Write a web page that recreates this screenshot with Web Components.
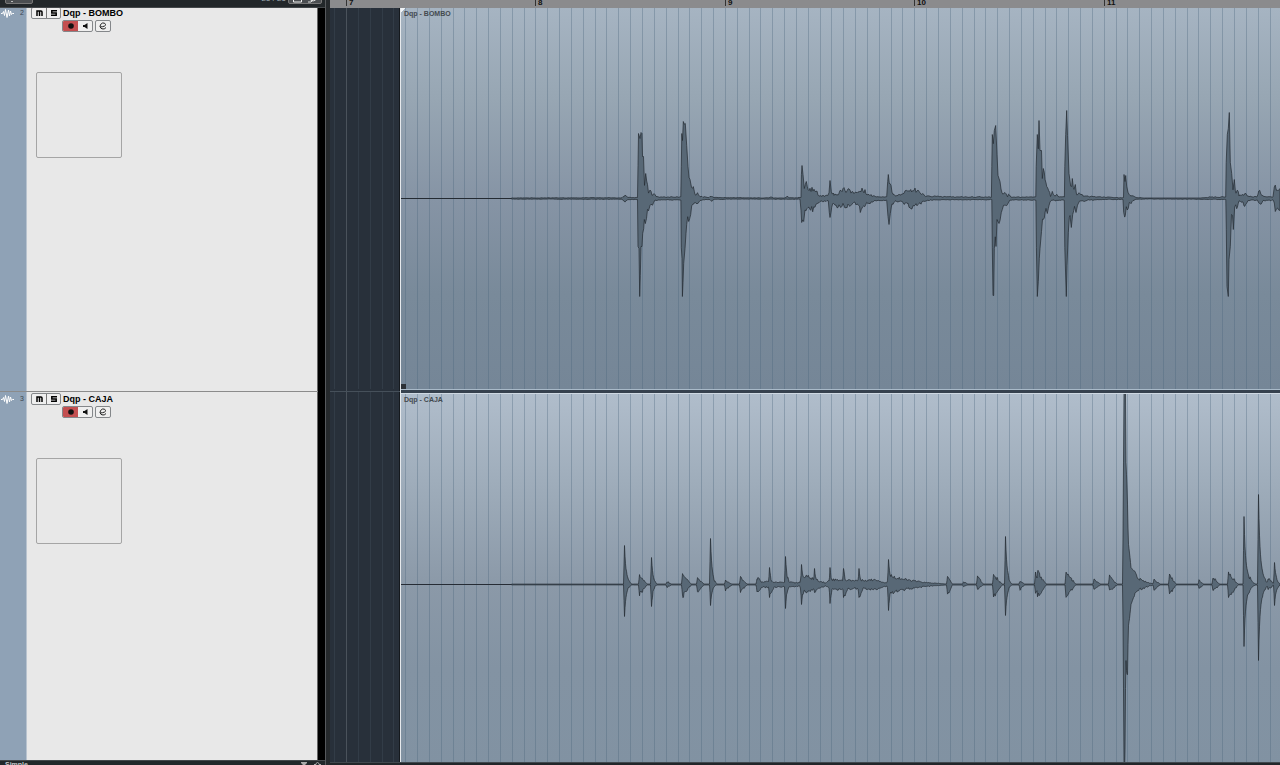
<!DOCTYPE html>
<html lang="es">
<head>
<meta charset="utf-8">
<title>Arrange view</title>
<style>
  html, body { margin: 0; height: 100%; background: #22272a; }
  body { font-family: "Liberation Sans", Arial, sans-serif; overflow: hidden; }
</style>
</head>
<body>
<daw-arranger>
  <daw-sidebar slot="side">
    <daw-track number="2" name="Dqp - BOMBO"></daw-track>
    <daw-track number="3" name="Dqp - CAJA"></daw-track>
  </daw-sidebar>
  <daw-timeline slot="time">
    <daw-lane wave="bombo" name="Dqp - BOMBO" tone="low"></daw-lane>
    <daw-lane wave="caja" name="Dqp - CAJA" tone="high"></daw-lane>
  </daw-timeline>
</daw-arranger>

<script>
const define = (tag, html, setup) => customElements.define(tag, class extends HTMLElement {
  constructor() { super(); this.attachShadow({ mode: 'open' }); }
  connectedCallback() {
    this.shadowRoot.innerHTML = typeof html === 'function' ? html(this) : html;
    if (setup) setup(this, this.shadowRoot);
  }
});

define('daw-arranger', `
<style>
  :host { display: grid; grid-template-columns: 326px 1fr; height: 100vh; overflow: hidden; background: #25292c; column-gap: 4px; }
  ::slotted(*) { min-width: 0; min-height: 0; }
</style>
<slot name="side"></slot><slot name="time"></slot>`);

define('daw-sidebar', `
<style>
  :host { display: flex; flex-direction: column; box-sizing: border-box; border-right: 1px solid #56595c; background: #000; }
  header { flex: none; height: 8px; box-sizing: border-box; border-bottom: 1px solid #44484b; overflow: hidden; display: flex; align-items: flex-end; background: #22272a; }
  .bar { flex: 1; height: 24px; box-sizing: border-box; padding: 0 3px 3px 5px; display: flex; align-items: flex-end; gap: 2px; }
  .bar button { height: 18px; box-sizing: border-box; border: 1px solid #777; border-radius: 2px; background: #4b4e51; padding: 0 4px; display: flex; align-items: flex-end; gap: 6px; }
  .bar .menu { width: 28px; }
  .count { margin-left: auto; color: #9ba6b0; font-size: 8px; line-height: 11px; }
  .rows { flex: 1; min-height: 0; overflow: hidden; }
  .rows ::slotted(:first-child) { margin-top: -2px; }
  footer { flex: none; height: 5px; box-sizing: border-box; border-top: 1px solid #44484b; overflow: hidden; background: #22272a; color: #c6c9cb; font-size: 7px; line-height: 8px; font-weight: 700; }
  .foot { height: 20px; display: flex; align-items: flex-start; padding: 0 4px 0 5px; gap: 7px; }
  .foot span { margin-right: auto; }
  .foot svg { margin-top: 1px; }
  svg { display: block; }
</style>
<header><div class="bar">
  <button class="menu" aria-label="Menu"><svg width="4" height="12"><path d="M1 10h2v1H1z" fill="#bbb"/></svg></button>
  <span class="count">25 / 26</span>
  <button aria-label="Filter"><svg width="9" height="14"><path d="M.5 1v12h8V1" fill="none" stroke="#eee"/></svg><svg width="9" height="14"><circle cx="5" cy="9" r="3" fill="none" stroke="#ddd"/><path d="M0 13h3l2-2" stroke="#ddd" fill="none"/></svg></button>
</div></header>
<div class="rows"><slot></slot></div>
<footer><div class="foot"><span>Simple</span>
  <svg width="6" height="4"><path d="M0 0h6v1L3 4 0 1z" fill="#aaa"/></svg>
  <svg width="7" height="8"><path d="M0 2.500h2v-1l1.500-1L5 1.500v1h2M1.500 3v5M5.500 3v5" fill="none" stroke="#aaa"/></svg>
</div></footer>`);

define('daw-track', el => `
<style>
  :host { display: grid; grid-template-columns: 27px 1fr; height: 386px; box-sizing: border-box; border-bottom: 1px solid #8b8b8b; margin-right: 7px; background: #e8e8e8; }
  .strip { background: #8fa2b6; border-right: 1px solid #b8c3cf; display: flex; justify-content: space-between; padding: 1px 2px 0 1px; }
  .strip span { font-size: 7px; line-height: 12px; color: #3d4751; }
  .panel { border-right: 1px solid #666; padding: 1px 0 0 4px; }
  .row { display: flex; align-items: center; }
  .title { gap: 2px; }
  h2 { margin: 0; font-size: 9px; line-height: 12px; font-weight: 700; color: #000; white-space: nowrap; }
  .tools { gap: 2px; padding: 1px 0 0 31px; }
  .group { display: flex; border: 1px solid #84878a; border-radius: 2px; background: #efefef; overflow: hidden; }
  button { box-sizing: border-box; display: flex; align-items: center; justify-content: center; width: 14px; height: 10px; padding: 0; border: 0; background: none; color: #111; }
  .ms button + button { border-left: 1px solid #777; }
  .rec { background: #c34f50; width: 15px; }
  .art { width: 84px; height: 84px; border: 1px solid #a5a5a5; border-radius: 2px; margin: 40px 0 0 5px; }
  svg { display: block; }
</style>
<div class="strip">
  <svg width="13" height="12" fill="none" stroke="#fff" stroke-linejoin="round"><path d="M0 6.500h1.500l1-2 1 4 1-6 1.500 8L7.500 3l1 6 1-5 1 3.500 1-1H13"/></svg>
  <span>${el.getAttribute('number')}</span>
</div>
<div class="panel">
  <div class="row title">
    <div class="group ms">
      <button aria-label="Mute"><svg width="7" height="6" fill="none" stroke="#000" stroke-width="1.500"><path d="M1 6V1h4q1 0 1 1v4M3.500 1v5"/></svg></button>
      <button aria-label="Solo"><svg width="6" height="6" fill="none" stroke="#000" stroke-width="1.500"><path d="M6 .8H.8V3h4.400v2.200H0"/></svg></button>
    </div>
    <h2>${el.getAttribute('name')}</h2>
  </div>
  <div class="row tools">
    <div class="group">
      <button class="rec" aria-label="Record"><svg width="6" height="6"><circle cx="3" cy="3" r="2.800" fill="#111"/></svg></button>
      <button aria-label="Monitor"><svg width="5" height="6"><path d="M0 2h1.500L4.500 0v6L1.500 4H0z" fill="#111"/></svg></button>
    </div>
    <div class="group">
      <button aria-label="Edit channel"><svg width="8" height="8" fill="none" stroke="#222"><path d="M1 5Q7 4.500 6.500 2.500 6 .5 3.500 1 1 2 1 4.500 1.500 7 4 7 6 7 7 5.500"/></svg></button>
    </div>
  </div>
  <div class="art"></div>
</div>`);

define('daw-timeline', `
<style>
  :host { display: flex; flex-direction: column; overflow: hidden; background: #28303a; }
  .ruler { flex: none; height: 8px; display: flex; padding-left: 16px; overflow: hidden; background: #8b8b8d; }
  .ruler span { flex: none; box-sizing: border-box; width: 189px; border-left: 1px solid #333; padding-left: 2px; font-size: 8px; line-height: 7px; height: 7px; font-weight: 700; color: #111; margin-top: -1px; }
  .ruler span:nth-child(even) { width: 190px; }
  .lanes { flex: 1; min-height: 0; overflow: hidden; }
  .lanes ::slotted(:first-child) { margin-top: -2px; }
  .edge { flex: none; height: 3px; box-sizing: border-box; border-top: 1px solid #41484e; background: #22262a; }
</style>
<div class="ruler"><span>7</span><span>8</span><span>9</span><span>10</span><span>11</span></div>
<div class="lanes"><slot></slot></div>
<div class="edge"></div>`);

/* Envelopes: x, level. "up" is above the zero line, "down" below it. */
const bombo = {
  up: [401,0,511,0,512,.6,622,.8,625,3,628,1,637.5,1,638,33,638.5,65,640,60,641,66,642,65,642.5,42,643.5,42,644.5,12,645.7,25,647.5,14,648.5,7,650,9,652,3,654,5,656,1.8,664,1.5,680.8,1.5,681.3,32,681.8,65,682.5,58,683.3,77,685.3,75,686.7,53,688,32,690,19,691.5,10,693.3,10,695,4,697.5,5,700,2,709,1,711.700,3,714,1,735,.8,769,.6,771,2,773,.6,785,.6,787,2.5,789,.6,801,1,801.4,24,802,33,803,24,804.3,11,805.300,14,806.3,17,808,8,810,11,814,9,820,3,828,3,829,7,830,18,831.3,9,834,4,838,4,840,9,848,9,857,6,860,8,865,9,868,4,877,2,886.700,2,887.700,17,888.300,24,890,15,892,7,894,4,900,4,906.700,7,910.700,9,915,9,921.700,4.500,927,2.5,947,1.8,990,1.5,991.400,1.5,991.800,32,992.300,64,994.300,68,995.700,73,997,44,999,20,1001,11,1003,5,1005,7,1007.500,2,1008.500,4,1011,1.5,1035.800,1.5,1036.200,32,1037.300,64,1039,78,1040,48,1041.500,48,1042.300,20,1043.300,30,1045,19,1046.700,11,1048.700,9,1050.500,2,1052.300,6,1055,2,1056,4,1060,2,1064.400,1.5,1064.800,32,1065.700,64,1066.700,88,1067.500,63,1069,25,1070.700,12,1072.300,20,1074,9,1075.300,14,1077,4,1079,5,1085,2.500,1100,1.500,1120,.8,1123.500,1,1124,24,1125.700,23,1126.700,11,1128,6,1132,3,1136,1,1145,.5,1200,.5,1210,1.5,1225.700,1.5,1226.200,36,1227.300,64,1228.300,70,1229.300,86,1230.300,36,1231.700,25,1233,10,1234.300,19,1236,6,1237.300,9,1239,3,1243,4,1245.300,6,1249,2,1257,2,1258.700,9,1261,5,1264,2,1273,1.5,1274.300,12,1277,9,1280,10],
  down: [401,0,511,0,512,.6,622,.8,625,3,628,1,637.5,1,638,48,639,50,639.700,98,640.300,77,641,48,642,48,642.700,35,644.300,21,646.500,20,648.500,11,650,7,652.500,6,655,2,664,1.3,680.900,1.500,681.3,49,682,60,682.400,98,683,84,683.700,65,685,50,686.700,26,688.700,23,690.700,16,693,7,697,5,700,2,709,1,711.700,3,714,1,735,.6,800,.8,801,11,801.700,24,803.700,23,805,12,808,11,810.700,12,815,9,820,3,828.300,3,830,19,831.700,8,835,7,840,8,847,8,853,5,858.500,6,860.300,14,862.700,8,868,5,877,2,886.700,2,888,18,889,26,890.300,15,892,6,895,3,903,4,910,9,915,8,922,4,928,2,947,1.3,991.800,1.2,992.300,49,993,97,993.700,97,994.300,50,996,48,997,21,999,25,1001.300,14,1003.500,6,1006.700,7,1010,1.5,1035.900,1.5,1036.400,49,1037.300,98,1038.300,83,1039.300,60,1040,50,1041.500,33,1043.300,21,1045,14,1047.300,15,1049,6,1052,2,1064.300,2,1064.800,49,1066.300,98,1067,67,1068.300,34,1070,17,1071.300,29,1072.700,16,1074.500,8,1076,14,1077.500,6,1081,3,1087,2,1100,1,1123,1,1123.700,14,1125.300,17,1127.300,10,1130,5,1135,1,1145,.5,1225.800,1,1226.300,31,1227,88,1228.300,98,1229,61,1230.300,48,1231.500,16,1233.300,31,1234.700,8,1237.300,11,1239,3,1244.700,7,1248,2,1257.500,2,1260,7,1263,2,1273.300,2,1275.300,13,1277.500,9,1280,10]
};

/* Snare hits: x, peak above, peak below, tail length. */
const hits = [
  [624.5,39,32,9],[639.5,9,10,8],[651.5,27,22,7],[667,3,3,5],[682.5,11,12,9],[697.500,6,7,7],[710.5,46,21,8],
  [725.5,4,6,7],[740.5,7,7,7],[757,7,8,8],[769.5,17,13,6],[785.5,28,24,7],[801.5,20,20,16],[814.5,16,9,7],
  [830,17,19,9],[843.5,16,13,6],[859,16,13,6],[888.5,25,26,14],[947.5,8,11,5],[963.500,3,2,5],[977.500,8,5,6],
  [993.500,10,12,9],[1005.500,48,31,8],[1020,4,5,5],[1035.500,11,8,4],[1037.500,13,12,9],[1066,12,12,10],
  [1094,5,5,7],[1109.500,8,7,8],[1154,5,5,7],[1169.500,9,10,7],[1199,4,4,5],[1213,7,7,7],[1228.500,11,13,10],
  [1244,68,62,14],[1258.500,90,76,12],[1268,6,5,7],[1274.500,22,21,8]
];
const floor = [401,0,511,0,512,.4,756,.5,758,3,800,2,801,7,808,8,815,5,826,1.5,830,5,860,4,861,4,876,5,884,2,887,2,889,9,897,7,905,5,925,2,945,.6,990,.5,1120,.5,1200,.4,1280,.5];
const crash = {
  up: [1122.700,0,1123.300,95,1124,191,1125.500,191,1126,122,1127.300,90,1128.300,42,1130,27,1131,17,1135,12,1138,6,1145,3,1152,1,1156,0],
  down: [1122.700,0,1123.300,75,1124,178,1124.500,191,1125.200,155,1125.700,70,1126.700,90,1127.500,90,1128.300,42,1129.500,34,1131,20,1135,9,1140,5,1148,2,1155,0]
};
const levelAt = (k, x) => {
  if (x <= k[0] || x >= k[k.length - 2]) return x === k[0] ? k[1] : 0;
  let i = 0;
  while (k[i + 2] < x) i += 2;
  return k[i + 1] + (k[i + 3] - k[i + 1]) * (x - k[i]) / (k[i + 2] - k[i]);
};
const snare = side => {
  const out = [];
  const s = side === 'up' ? 1 : 2;
  for (let x = 401; x <= 1280; x += .5) {
    let v = levelAt(floor, x);
    for (const h of hits) {
      const d = x - h[0], a = h[s];
      if (d < -1 || d > h[3]) continue;
      const t = 1 - d / h[3];
      const f = d < 0 ? 1 + d : a > 14 ? .72 * Math.exp(-d / 1.2) + .28 * t * t : t;
      v = Math.max(v, a * f);
    }
    out.push(x, Math.max(v, levelAt(crash[side], x)));
  }
  return out;
};
const waves = { bombo, caja: { up: snare('up'), down: snare('down') } };

const noise = n => { const v = Math.sin(n * 12.9898) * 43758.5453; return v - Math.floor(v); };
const points = (keys, seed) => {
  const list = [];
  for (let i = 0; i < keys.length; i += 2) {
    const x = keys[i], v = keys[i + 1];
    const rough = v > 1 && v < 13 ? .75 + .45 * noise(Math.floor(x) + seed) : 1;
    list.push([x, v * rough]);
    if (i + 2 < keys.length && keys[i + 2] - x > 1.5) {
      for (let p = x + 1; p < keys[i + 2] - .5; p++) {
        const l = levelAt(keys, p);
        list.push([p, l * (l > .5 ? .6 + .65 * noise(p + seed) : 1)]);
      }
    }
  }
  return list;
};
const wavePath = w => {
  const up = points(w.up, 3).map(([x, v]) => `${x.toFixed(1)} ${(-v).toFixed(1)}`);
  const down = points(w.down, 71).reverse().map(([x, v]) => `${x.toFixed(1)} ${v.toFixed(1)}`);
  return `M${up.join('L')}L${down.join('L')}Z`;
};
const gridPath = (from, to) => {
  let d = '';
  for (let n = -2; n < 400; n++) {
    const x = Math.round(346 + n * 11.84);
    if (x >= from && x < to) d += `M${x - from + .5} 0v383`;
  }
  return d;
};

define('daw-lane', el => `
<style>
  :host { display: grid; grid-template-columns: 70px 1fr; height: 386px; box-sizing: border-box; }
  .before { border-bottom: 1px solid #46505a; overflow: hidden; }
  .after { border-left: 1px solid #e6e9ec; padding-top: 1px; overflow: hidden; background: #36414e; }
  .clip { display: grid; height: 383px; box-sizing: border-box; border-top: 1px solid #cfd9e3; border-bottom: 1px solid #a9bac9; overflow: hidden; }
  .clip > * { grid-area: 1 / 1; }
  .low { background: linear-gradient(#a6b4c2, #97a6b3 24%, #8694a5 50%, #798a9a 75%, #758697); }
  .high { background: linear-gradient(#b0bdcb, #9eacba 24%, #8b99a8 50%, #8393a3 72%, #8192a2); }
  h3 { margin: 1px 0 0 3px; font-size: 7px; line-height: 10px; font-weight: 700; color: #444a50; white-space: nowrap; }
  .corner, .handle { width: 5px; height: 5px; }
  .corner { background: linear-gradient(135deg, #eef2f5 50%, transparent 50%); }
  .handle { align-self: end; background: #2b3036; }
  svg { display: block; }
</style>
<div class="before"><svg width="70" height="385"><path d="${gridPath(330, 400)}" stroke="#323c47"/><path d="M16.500 0v385" stroke="#4a525b"/><path d="M69.500 0v385" stroke="#15191d"/></svg></div>
<div class="after"><div class="clip ${el.getAttribute('tone')}">
  <svg width="3840" height="381"><path d="${gridPath(401, 4241)}" stroke="#4a637c" stroke-opacity=".34"/></svg>
  <svg width="879" height="381" viewBox="401 -190.500 879 381">
    <path d="M401 0H1280" stroke="#3b444c"/>
    <path d="${wavePath(waves[el.getAttribute('wave')])}" fill="#586876" stroke="#232a30" stroke-width=".7" stroke-linejoin="bevel"/>
  </svg>
  ${el.getAttribute('tone') === 'low' ? '<div class="corner"></div>' : ''}
  <h3>${el.getAttribute('name')}</h3>
  ${el.getAttribute('tone') === 'low' ? '<div class="handle"></div>' : ''}
</div></div>`);
</script>
</body>
</html>
